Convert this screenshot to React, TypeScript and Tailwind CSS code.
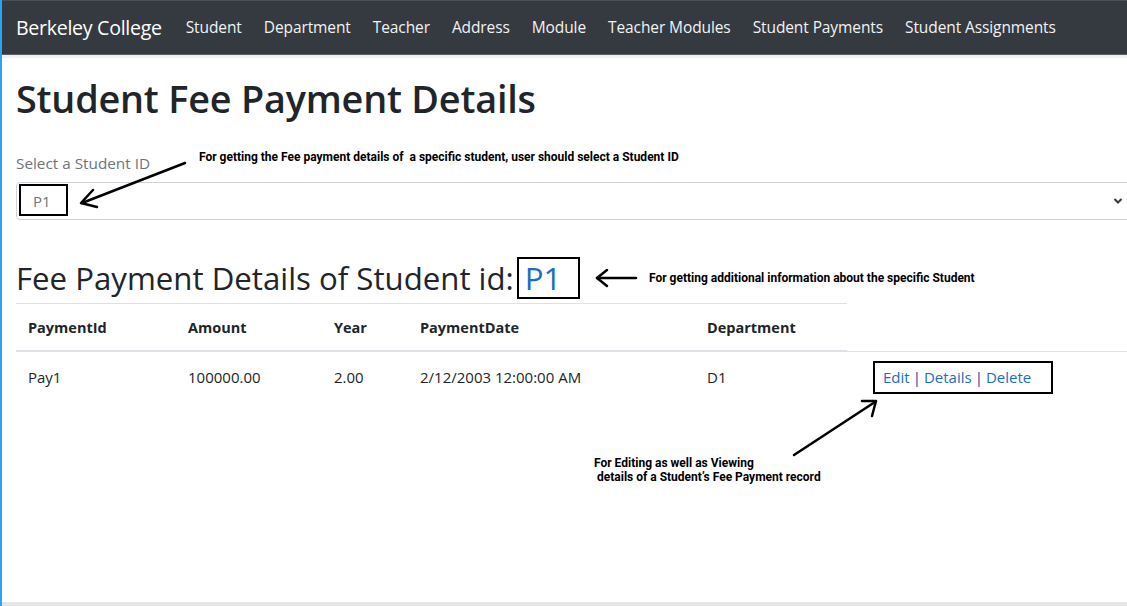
import React from "react";

const navItems = [
  "Student",
  "Department",
  "Teacher",
  "Address",
  "Module",
  "Teacher Modules",
  "Student Payments",
  "Student Assignments",
];

const cols = "grid grid-cols-[160px_146px_86px_287px_178px_1fr]";

const Note = ({ className, children }: { className: string; children: React.ReactNode }) => (
  <div
    className={`absolute text-[12px] font-bold leading-[14px] text-black whitespace-pre ${className}`}
    style={{ fontFamily: "Roboto, 'Liberation Sans', sans-serif" }}
  >
    {children}
  </div>
);

export default function App() {
  return (
    <div
      className="relative w-[1127px] h-[606px] overflow-hidden bg-white text-[#212529] border-l-2 border-[#2aa3f5]"
      style={{ fontFamily: "'Open Sans', 'Noto Sans', sans-serif" }}
    >
      <nav className="h-[55px] bg-[#343a40] border-t border-[#4a4f55] border-b border-b-[#5a5f64] flex items-center pl-[14px]">
        <span className="text-[19.6px] text-white mr-[24px] tracking-[-0.3px]">Berkeley College</span>
        <ul className="flex gap-[22px] text-[15.5px] text-[#f2f2f2] tracking-[-0.1px]">
          {navItems.map((n) => (
            <li key={n}>{n}</li>
          ))}
        </ul>
      </nav>
      <div className="h-[3px] bg-[#f1f1f1]" />

      <main className="px-[14px]">
        <h1 className="mt-[17px] text-[37.8px] leading-[48px] font-semibold tracking-[-0.2px]">
          Student Fee Payment Details
        </h1>

        <label className="block mt-[28px] text-[15.3px] leading-[24px] text-[#6c757d]">Select a Student ID</label>
        <div className="mt-[7px] h-[38px] mr-[-20px] border border-[#ced4da] rounded-[4px] flex items-center justify-between pl-[16px] pr-[8px]">
          <span className="text-[15px] text-[#6c757d]">P1</span>
          <svg width="12" height="8" viewBox="0 0 12 8">
            <path d="M2.5 2l3.5 3.5 3.5-3.5" fill="none" stroke="#343a40" strokeWidth="2" />
          </svg>
        </div>

        <h2 className="mt-[37px] text-[31.2px] leading-[40px] flex items-center">
          <span>Fee Payment Details of Student id:</span>
          <span className="ml-[3px] border-2 border-black h-[42px] w-[63px] pl-[6px] text-[#1b6ec2] flex items-center">P1</span>
        </h2>

        <div className="mt-[4px] relative">
          <div className="h-px w-[831px] bg-[#dee2e6]" />
          <div className={`${cols} h-[47px] items-center font-bold text-[14.5px]`}>
            <div className="px-3">PaymentId</div>
            <div className="px-3">Amount</div>
            <div className="px-3">Year</div>
            <div className="px-3">PaymentDate</div>
            <div className="px-3">Department</div>
            <div />
          </div>
          <div className="relative h-px bg-[#dee2e6] mr-[-20px]">
            <div className="absolute left-0 top-[-1px] h-[2px] w-[831px] bg-[#dee2e6]" />
          </div>
          <div className={`${cols} h-[50px] items-center text-[15px]`}>
            <div className="px-3">Pay1</div>
            <div className="px-3">100000.00</div>
            <div className="px-3">2.00</div>
            <div className="px-3">2/12/2003 12:00:00 AM</div>
            <div className="px-3">D1</div>
            <div>
              <div className="w-[180px] h-[33px] border-2 border-black flex items-center pl-[8px] text-[15px] text-[#1b6ec2]">
                <span>Edit</span>
                <span className="mx-[3px] text-[#1a3aa8]">|</span>
                <span>Details</span>
                <span className="mx-[3px] text-[#1a3aa8]">|</span>
                <span>Delete</span>
              </div>
            </div>
          </div>
        </div>
      </main>

      {/* annotation box around select value */}
      <div className="absolute left-[17px] top-[184px] w-[49px] h-[32px] border-2 border-black" />

      <svg className="absolute left-0 top-0" width="1127" height="606">
        <g fill="none" stroke="#000" strokeWidth="2.5" strokeLinecap="round" strokeLinejoin="round">
          <path d="M183 163 L80 203" />
          <path d="M91 190 L79 203 L95 207" />
          <path d="M634 278 L595 278" />
          <path d="M605 270 L595 278 L605 286" />
          <path d="M792 455 L873 402" />
          <path d="M860 401 L874 401 L870 416" />
        </g>
      </svg>

      <Note className="left-[197px] top-[150px]">
        For getting the Fee payment details of  a specific student, user should select a Student ID
      </Note>
      <Note className="left-[647px] top-[271px]">For getting additional information about the specific Student</Note>
      <Note className="left-[592px] top-[456px]">{"For Editing as well as Viewing\n details of a Student\u2019s Fee Payment record"}</Note>

      <div className="absolute left-0 right-0 bottom-0 h-[4px] bg-[#e6e6e6]" />
    </div>
  );
}
